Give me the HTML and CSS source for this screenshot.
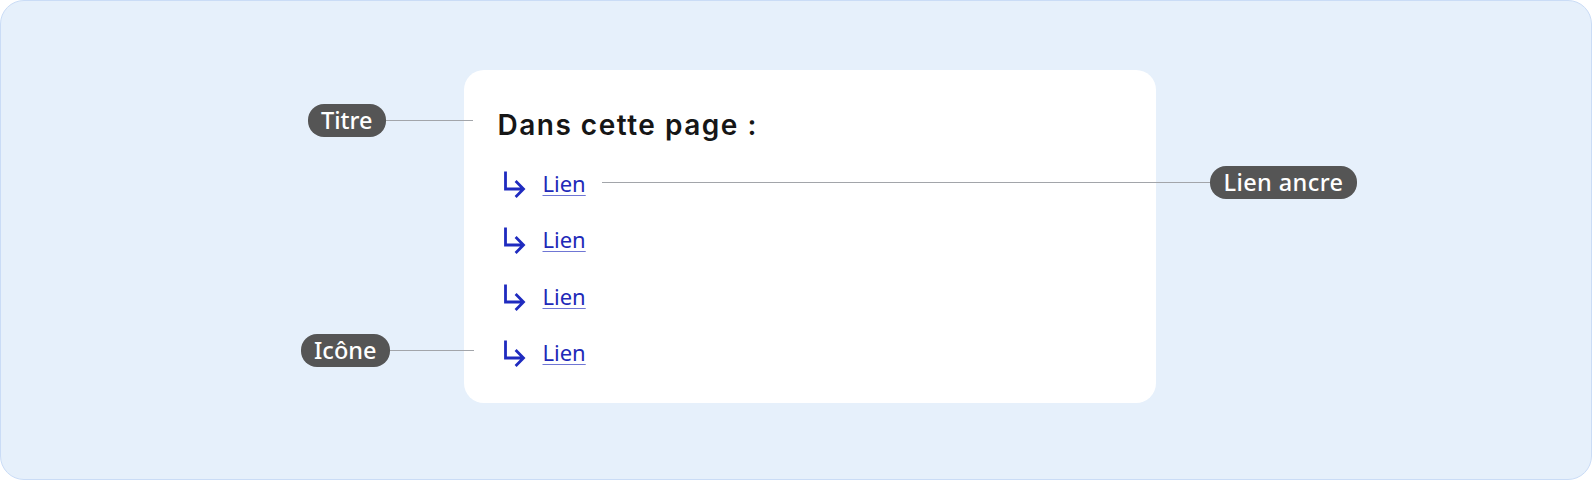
FILE: index.html
```html
<!DOCTYPE html>
<html lang="fr">
<head>
<meta charset="utf-8">
<title>Sommaire</title>
<link rel="stylesheet" href="styles.css">
</head>
<body>
<div class="frame">
  <div class="card">
    <nav class="summary">
      <h2 class="summary-title">Dans cette page :</h2>
      <ul class="summary-list">
        <li class="summary-item"><svg class="arrow" viewBox="0 0 24 24" width="24" height="24"><path d="M3.5 0.5V18H21.5M13.6 10.1L21.5 18L13.6 25.9"/></svg><a class="summary-link" href="#a">Lien</a></li>
        <li class="summary-item"><svg class="arrow" viewBox="0 0 24 24" width="24" height="24"><path d="M3.5 0.5V18H21.5M13.6 10.1L21.5 18L13.6 25.9"/></svg><a class="summary-link" href="#b">Lien</a></li>
        <li class="summary-item"><svg class="arrow" viewBox="0 0 24 24" width="24" height="24"><path d="M3.5 0.5V18H21.5M13.6 10.1L21.5 18L13.6 25.9"/></svg><a class="summary-link" href="#c">Lien</a></li>
        <li class="summary-item"><svg class="arrow" viewBox="0 0 24 24" width="24" height="24"><path d="M3.5 0.5V18H21.5M13.6 10.1L21.5 18L13.6 25.9"/></svg><a class="summary-link" href="#d">Lien</a></li>
      </ul>
    </nav>
    <div class="callout callout-title"><span class="pill">Titre</span><span class="leader leader-title"></span></div>
    <div class="callout callout-icon"><span class="pill">Icône</span><span class="leader leader-icon"></span></div>
    <div class="callout callout-link"><span class="leader leader-link"></span><span class="pill pill-wide">Lien ancre</span></div>
  </div>
</div>
</body>
</html>
```
FILE: styles.css
```css
* { box-sizing: border-box; }
html, body { margin: 0; padding: 0; background: #ffffff; }
body { width: 1592px; height: 480px; overflow: hidden; }

.frame {
  width: 1592px;
  height: 480px;
  background: #e6f0fb;
  border: 1.5px solid #cadcf6;
  border-radius: 24px;
  padding: 68.5px 0 0 462.5px;
}

.card {
  position: relative;
  width: 692px;
  height: 333px;
  background: #ffffff;
  border-radius: 20px;
  padding: 38px 32px 0 34px;
}

.summary {
  display: flex;
  flex-direction: column;
  gap: 26.4px;
}

.summary-title {
  margin: 0;
  font-family: "Inter", "Liberation Sans", sans-serif;
  font-weight: 600;
  font-size: 28px;
  line-height: 34px;
  color: #161616;
  letter-spacing: 1.5px;
}

.summary-list {
  list-style: none;
  margin: 0;
  padding: 0;
  display: flex;
  flex-direction: column;
  gap: 26.33px;
}

.summary-item {
  display: flex;
  align-items: center;
  height: 30px;
  padding-left: 4px;
}

.arrow {
  flex: none;
  fill: none;
  stroke: #1f2bbf;
  stroke-width: 2.8;
  stroke-linejoin: miter;
  overflow: visible;
  margin-right: 17px;
}

.summary-link {
  font-family: "Noto Sans", "Open Sans", sans-serif;
  font-size: 22px;
  line-height: 30px;
  color: #2129b8;
  text-decoration: underline;
  text-decoration-thickness: 1px;
  text-underline-offset: 3px;
  text-decoration-color: #6f76d4;
}

.callout {
  position: absolute;
  display: flex;
  align-items: center;
}

.callout-title { right: calc(100% - 9px); top: 34px; }
.callout-icon { right: calc(100% - 10px); top: 264px; }
.callout-link { left: 138px; top: 96px; }

.pill {
  display: inline-flex;
  align-items: center;
  height: 33.5px;
  padding: 0 13px;
  background: #555555;
  color: #ffffff;
  border-radius: 16px;
  font-family: "Noto Sans", "Open Sans", sans-serif;
  font-weight: 500;
  font-size: 23.5px;
  line-height: 1;
  white-space: nowrap;
}

.pill-wide { letter-spacing: 0.4px; padding: 0 14px; }

.leader {
  display: block;
  height: 1.5px;
  background: #a2a5aa;
}
.leader-title { width: 87px; }
.leader-icon { width: 84px; }
.leader-link { width: 608px; }
```
